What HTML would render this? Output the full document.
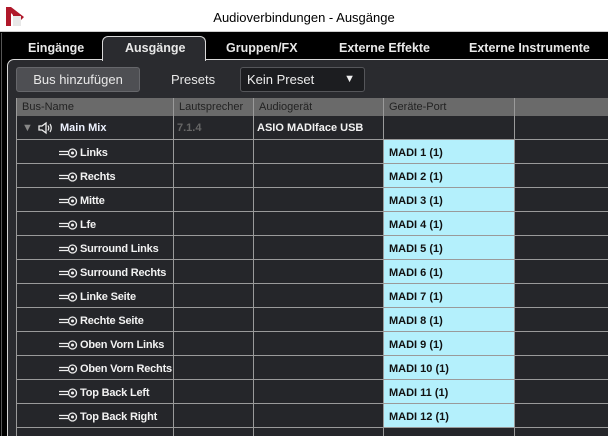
<!DOCTYPE html>
<html><head><meta charset="utf-8"><style>
*{margin:0;padding:0;box-sizing:border-box}
html,body{width:608px;height:436px;overflow:hidden}
body{background:#000;font-family:"Liberation Sans",sans-serif;position:relative}
.a{position:absolute}
svg{display:block}
.title{left:0;top:0;width:608px;height:32px;background:#fff;border-bottom:1px solid #ccc}
.tt{left:0;width:608px;top:10px;text-align:center;font-size:13px;color:#000}
.tab{top:41px;font-size:12.5px;font-weight:bold;color:#e8e8e8}
.panel{left:7px;top:59px;width:601px;height:377px;background:#2a2b2f;border:1px solid #d8d8d8;border-right:none;border-bottom:none;border-radius:7px 0 0 0}
.atab{left:102px;top:36px;width:104px;height:25px;background:#2a2b2f;border:1px solid #d8d8d8;border-bottom:none;border-radius:6px 6px 0 0}
.btn{left:16px;top:67px;width:124px;height:25px;background:#4e4f53;border:1px solid #66676b;border-radius:3px;color:#e8e8e8;font-size:13px;text-align:center;line-height:23px}
.dd{left:240px;top:67px;width:125px;height:25px;background:#1c1d20;border:1px solid #55565a;border-radius:3px;color:#eee;font-size:13px;line-height:23px;padding-left:6px}
.hdr{left:16px;top:98px;width:592px;height:18px;background:#6a6a6a}
.h{top:101px;font-size:11px;color:#222}
.row{left:16px;width:592px;height:24px;background:#25262a;border-bottom:1px solid #9a9a9a}
.vl{top:98px;width:1px;height:338px;background:#9a9a9a}
.cy{left:384px;width:130px;height:23px;background:#b4f0fc}
.t{font-size:11px;font-weight:bold;color:#f2f2f2}
.m{font-size:11px;font-weight:bold;color:#111}
</style></head><body>
<div class="a title"></div>
<svg class="a" style="left:5px;top:6px" width="22" height="22" viewBox="0 0 22 22"><path d="M1 1h5l13 10-3 3v6H8V9L6 7v13H1z" fill="#b0182a"/><path d="M8 10l8 0-0 10H8z" fill="#e8e8e8"/></svg>
<div class="a tt">Audioverbindungen - Ausgänge</div>
<div class="a" style="left:1px;top:33px;width:1px;height:403px;background:#555"></div>
<div class="a panel"></div>
<div class="a atab"></div>
<div class="a tab" style="left:28px">Eingänge</div>
<div class="a tab" style="left:125px">Ausgänge</div>
<div class="a tab" style="left:226px">Gruppen/FX</div>
<div class="a tab" style="left:339px">Externe Effekte</div>
<div class="a tab" style="left:469px">Externe Instrumente</div>
<div class="a btn">Bus hinzufügen</div>
<div class="a" style="left:171px;top:72px;font-size:13px;color:#e8e8e8">Presets</div>
<div class="a dd">Kein Preset<span style="position:absolute;right:9px;top:0;font-size:11px">▼</span></div>
<div class="a hdr"></div>
<div class="a h" style="left:22px">Bus-Name</div>
<div class="a h" style="left:179px">Lautsprecher</div>
<div class="a h" style="left:259px">Audiogerät</div>
<div class="a h" style="left:389px">Geräte-Port</div>

<div class="a row" style="top:116px"></div>
<div class="a" style="left:22px;top:122px;font-size:11px;color:#888">▼</div>
<svg class="a" style="left:38px;top:121px" width="16" height="14" viewBox="0 0 16 14"><path d="M1 5h3l4-3v10l-4-3H1z" fill="none" stroke="#eee" stroke-width="1.3"/><path d="M10 4.5q1.5 2.5 0 5M12 3q2.5 4 0 8" fill="none" stroke="#eee" stroke-width="1.2"/></svg>
<div class="a t" style="left:60px;top:122px;color:#eef2ff">Main Mix</div>
<div class="a t" style="left:177px;top:122px;color:#666">7.1.4</div>
<div class="a t" style="left:257px;top:122px">ASIO MADIface USB</div>

<div id="rows"></div>
<div class="a vl" style="left:16px"></div>
<div class="a vl" style="left:173px"></div>
<div class="a vl" style="left:253px"></div>
<div class="a vl" style="left:383px"></div>
<div class="a vl" style="left:514px"></div>
<script>
var n=["Links","Rechts","Mitte","Lfe","Surround Links","Surround Rechts","Linke Seite","Rechte Seite","Oben Vorn Links","Oben Vorn Rechts","Top Back Left","Top Back Right",""];
var h="";
for(var i=0;i<n.length;i++){var y=140+i*24;
h+='<div class="a row" style="top:'+y+'px;'+(n[i]?'':'height:8px;border:none')+'"></div>';
if(n[i]){
h+='<div class="a cy" style="top:'+y+'px"></div>';
h+='<svg class="a" style="left:58px;top:'+(y+7)+'px" width="20" height="12" viewBox="0 0 20 12"><path d="M1 4.5h9M1 7.5h9" stroke="#eee" stroke-width="1.2"/><circle cx="14.5" cy="6" r="4" fill="none" stroke="#eee" stroke-width="1.3"/><circle cx="14.5" cy="6" r="1.5" fill="#eee"/></svg>';
h+='<div class="a t" style="left:80px;top:'+(y+7)+'px;letter-spacing:-0.2px">'+n[i]+'</div>';
h+='<div class="a m" style="left:389px;top:'+(y+7)+'px">MADI '+(i+1)+' (1)</div>';}}
document.getElementById("rows").outerHTML=h;
</script>
</body></html>
